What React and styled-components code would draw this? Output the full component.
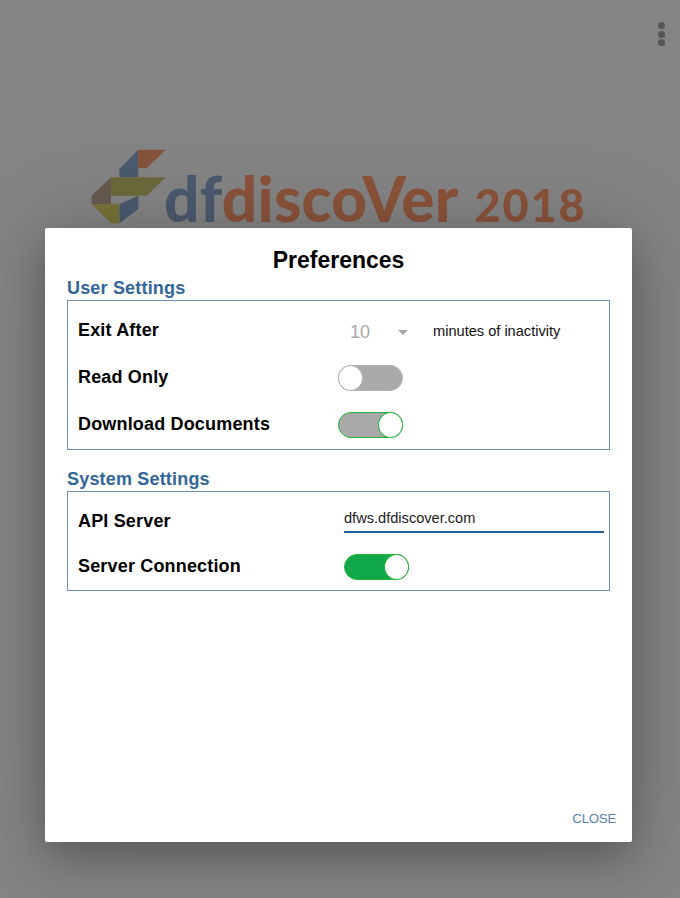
import React from "react";
import styled, { createGlobalStyle } from "styled-components";

const Global = createGlobalStyle`
  html, body { margin: 0; padding: 0; background: #808080; }
  body { font-family: "Liberation Sans", Arial, sans-serif; }
`;

const Page = styled.div`
  position: relative;
  width: 680px;
  height: 898px;
  overflow: hidden;
  background: #848484;
`;

const MenuDots = styled.div`
  position: absolute;
  top: 22px;
  right: 15px;
  display: flex;
  flex-direction: column;
  gap: 1.5px;
`;

const Dot = styled.span`
  width: 7px;
  height: 7px;
  border-radius: 50%;
  background: #545454;
`;

const Brand = styled.div`
  display: flex;
  align-items: flex-end;
  padding: 145px 0 0 85px;
  height: 85px;
`;

const LogoMark = styled.svg`
  width: 90px;
  height: 85px;
  flex: none;
  filter: blur(0.3px);
`;

const Wordmark = styled.div`
  margin: 0 0 -6px -11px;
  font-family: Lato, "Open Sans", sans-serif;
  font-weight: 900;
  font-size: 62px;
  line-height: 62px;
  letter-spacing: 0.3px;
  white-space: nowrap;
  color: #8a533a;
  filter: blur(0.4px);
`;

const WordBlue = styled.span`
  color: #4b5a6e;
`;

const WordYear = styled.span`
  margin-left: 16px;
  font-size: 45px;
  letter-spacing: 1.9px;
`;

const Modal = styled.div`
  position: absolute;
  left: 45px;
  top: 228px;
  width: 587px;
  height: 614px;
  box-sizing: border-box;
  padding: 0 22px;
  background: #fff;
  border-radius: 2px;
  box-shadow: 0 16px 40px rgba(0, 0, 0, 0.25), 0 0 90px rgba(0, 0, 0, 0.15);
  display: flex;
  flex-direction: column;
`;

const Title = styled.h1`
  margin: 18px 0 0;
  font-size: 23px;
  line-height: 28px;
  font-weight: 700;
  text-align: center;
  color: #000;
`;

const SectionTitle = styled.h2`
  margin: ${(p) => p.$top}px 0 0;
  font-size: 18px;
  line-height: 14px;
  font-weight: 700;
  letter-spacing: 0.18px;
  color: #336699;
`;

const Panel = styled.div`
  margin-top: 5px;
  box-sizing: border-box;
  height: ${(p) => p.$height}px;
  padding: ${(p) => p.$pad}px 4px 0 10px;
  border: 1px solid #6f8fb5;
  display: flex;
  flex-direction: column;
`;

const Row = styled.div`
  display: flex;
  align-items: center;
  height: ${(p) => p.$height}px;
`;

const Label = styled.div`
  width: ${(p) => p.$width}px;
  flex: none;
  font-size: 18px;
  font-weight: 700;
  letter-spacing: 0.17px;
  color: #000;
`;

const Select = styled.div`
  display: flex;
  align-items: center;
  width: 95px;
  padding-left: 12px;
  box-sizing: border-box;
  font-size: 18px;
  color: #a9a9a9;
  margin-top: 4px;
`;

const Caret = styled.span`
  margin-left: 28px;
  width: 0;
  height: 0;
  border-left: 5px solid transparent;
  border-right: 5px solid transparent;
  border-top: 5px solid #a6a6a6;
`;

const Hint = styled.span`
  font-size: 14.6px;
  color: #111;
  margin-top: 1px;
`;

const Track = styled.div`
  box-sizing: border-box;
  width: 65px;
  height: 26px;
  margin-top: ${(p) => (p.$fill ? 1 : 0)}px;
  border-radius: 13px;
  border: 1px solid ${(p) => (p.$on ? "#22b53c" : "#b3b3b3")};
  background: ${(p) => (p.$fill ? "#11a84a" : "#a9a9a9")};
  display: flex;
  justify-content: ${(p) => (p.$on ? "flex-end" : "flex-start")};
`;

const Knob = styled.div`
  box-sizing: border-box;
  flex: none;
  width: 25px;
  height: 26px;
  margin: -1px;
  border-radius: 50%;
  border: 1px solid ${(p) => (p.$on ? "#22b53c" : "#b3b3b3")};
  background: #fff;
`;

const TextInput = styled.div`
  flex: 1;
  box-sizing: border-box;
  height: 30px;
  margin: -6px 1px 0 0;
  padding-top: 4px;
  font-size: 14.6px;
  line-height: 22px;
  color: #222;
  border-bottom: 2px solid #1d5f9f;
`;

const Footer = styled.div`
  margin: auto -6px 14px 0;
  text-align: right;
  font-size: 13.4px;
  line-height: 18px;
  letter-spacing: -0.35px;
  color: #5b82ad;
`;

const Toggle = ({ on, fill }) => (
  <Track $on={on} $fill={fill}>
    <Knob $on={on} />
  </Track>
);

export default function App() {
  return (
    <Page>
      <Global />
      <MenuDots>
        <Dot />
        <Dot />
        <Dot />
      </MenuDots>
      <Brand>
        <LogoMark viewBox="0 0 270 255">
          <polygon points="160,14 103,72 103,97 160,97" fill="#4b5a6e" />
          <polygon points="160,152 160,192 103,235 103,178" fill="#4b5a6e" />
          <polygon points="160,14 242,14 185,70 160,70" fill="#85533c" />
          <polygon points="78,97 242,97 185,152 78,152" fill="#6c6a3c" />
          <polygon points="78,97 20,152 20,178 78,178 78,152" fill="#665a50" />
          <polygon points="20,178 103,178 103,235 78,235" fill="#777238" />
        </LogoMark>
        <Wordmark>
          <WordBlue>df</WordBlue>discoVer<WordYear>2018</WordYear>
        </Wordmark>
      </Brand>
      <Modal>
        <Title>Preferences</Title>
        <SectionTitle $top={7}>User Settings</SectionTitle>
        <Panel $height={150} $pad={6}>
          <Row $height={47}>
            <Label $width={260}>Exit After</Label>
            <Select>
              10
              <Caret />
            </Select>
            <Hint>minutes of inactivity</Hint>
          </Row>
          <Row $height={47}>
            <Label $width={260}>Read Only</Label>
            <Toggle />
          </Row>
          <Row $height={47}>
            <Label $width={260}>Download Documents</Label>
            <Toggle on />
          </Row>
        </Panel>
        <SectionTitle $top={22}>System Settings</SectionTitle>
        <Panel $height={100} $pad={6}>
          <Row $height={46}>
            <Label $width={266}>API Server</Label>
            <TextInput>dfws.dfdiscover.com</TextInput>
          </Row>
          <Row $height={44}>
            <Label $width={266}>Server Connection</Label>
            <Toggle on fill />
          </Row>
        </Panel>
        <Footer>CLOSE</Footer>
      </Modal>
    </Page>
  );
}
